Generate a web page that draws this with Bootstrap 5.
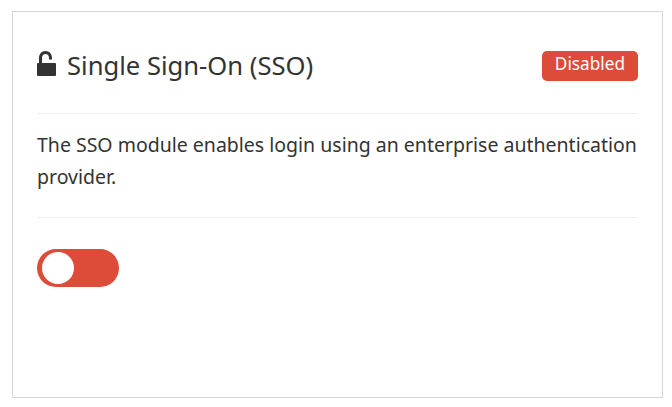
<!DOCTYPE html>
<html lang="en">
<head>
<meta charset="utf-8">
<title>SSO</title>
<link rel="stylesheet" href="https://cdn.jsdelivr.net/npm/bootstrap@5.3.0/dist/css/bootstrap.min.css">
<style>
html,body{height:100%;background:#fff;}
body{font-family:"Noto Sans","Open Sans",sans-serif;color:#333;padding:11px 9px 9px 12px;}
.sso-panel{height:387px;border:1px solid #d2d6de;padding:24px 24px 0 24px;width:651px;}
.sso-head{height:77px;padding-bottom:17px;}
.sso-title{font-size:25.6px;line-height:36px;color:#333;margin:0;font-weight:400;gap:11px;}
.sso-lock{width:19px;height:25px;fill:#333;margin-top:-6px;}
.sso-state{background:#dd4b39;color:#fff;font-size:17.2px;line-height:24px;border-radius:5px;padding:1px 13px 5px;margin-top:-1px;}
.sso-rule{border-top:1px solid #eee;opacity:1;margin:0;}
.sso-text{font-size:19.5px;line-height:32px;margin:0;padding:15px 0 24px;height:103px;}
.sso-toggle{width:82px;height:38px;border-radius:19px;background:#dd4b39;padding:3px 5px;margin-top:31px;}
.sso-knob{width:32px;height:32px;border-radius:50%;background:#fff;}
</style>
</head>
<body>
<div class="sso-panel">
  <div class="d-flex justify-content-between align-items-center sso-head">
    <h1 class="sso-title d-flex align-items-center">
      <svg class="sso-lock" viewBox="0 0 19 25" aria-hidden="true"><path d="M2 12V7C2 2.800 4.800 0 8.500 0S15 2.800 15 7V8.500h-3V7C12 4.500 10.500 3 8.500 3S5 4.500 5 7V12h12.800c.8 0 1.200.5 1.200 1.200v10.600c0 .8-.4 1.200-1.200 1.200H1.200C.4 25 0 24.600 0 23.800V13.200C0 12.500.4 12 1.200 12z"/></svg>
      Single Sign-On (SSO)
    </h1>
    <span class="sso-state">Disabled</span>
  </div>
  <hr class="sso-rule">
  <p class="sso-text">The SSO module enables login using an enterprise authentication provider.</p>
  <hr class="sso-rule">
  <div class="sso-toggle"><div class="sso-knob"></div></div>
</div>
</body>
</html>
